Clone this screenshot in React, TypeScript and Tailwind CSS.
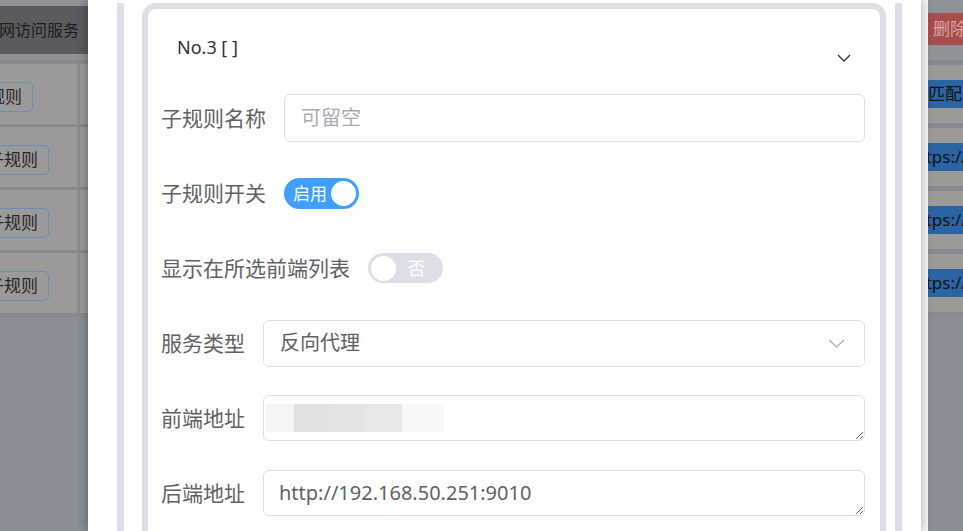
import React from "react";

const font = "font-['Noto_Sans','Noto_Sans_CJK_SC',sans-serif]";

function LeftRow({ first }: { first?: boolean }) {
  return (
    <>
      <div className="flex h-[60px]">
        <div className="w-[77px] bg-[#9a9a9b] flex items-center overflow-hidden">
          <div
            className={`mt-[5px] h-[30px] shrink-0 flex items-center border border-[#6b8db6] rounded-[5px] pr-[10px] text-[17px] text-[#262626] ${
              first ? "ml-[-13px]" : "ml-[-24px] pl-[10px]"
            }`}
          >
            {first ? "规则" : "子规则"}
          </div>
        </div>
        <div className="w-[3px] bg-[#8b8c8e]" />
        <div className="flex-1 bg-[#9a9a9b]" />
      </div>
      <div className="h-[3px] bg-[#88898c]" />
    </>
  );
}

function RightRow({ text, shift }: { text: string; shift: string }) {
  return (
    <div className="flex flex-col h-[63px]">
      <div className="h-[6px] bg-[#9a9a9b]" />
      <div className="h-[1px] bg-[#8da46c]" />
      <div className="h-[8px] bg-[#9a9a9b]" />
      <div className="h-[28px] bg-[#2b64a3] flex items-center overflow-hidden">
        <span className={`whitespace-nowrap text-[17px] text-[#111] ${shift}`}>{text}</span>
      </div>
      <div className="h-[9px] bg-[#9a9a9b]" />
      <div className="h-[1px] bg-[#8da46c]" />
      <div className="h-[5px] bg-[#9a9a9b]" />
      <div className="h-[5px] bg-[#87898c]" />
    </div>
  );
}

function Label({ children }: { children: React.ReactNode }) {
  return (
    <div className="shrink-0 mr-[18px] text-[21px] leading-[28px] text-[#606266] whitespace-nowrap">
      {children}
    </div>
  );
}

export default function App() {
  return (
    <div className={`w-[963px] h-[531px] overflow-hidden flex bg-[#8a8e95] ${font}`}>
      {/* left dimmed table */}
      <div className="w-[88px] shrink-0 flex flex-col">
        <div className="h-[6px] bg-[#8e9196]" />
        <div className="h-[48px] bg-[#5a5b5e] flex items-center overflow-hidden">
          <span className="whitespace-nowrap text-[16px] text-[#1b1b1b] ml-[-1px]">网访问服务</span>
        </div>
        <div className="h-[6px] bg-[#8e9195]" />
        <div className="h-[4px] bg-[#86898d]" />
        <LeftRow first />
        <LeftRow />
        <LeftRow />
        <LeftRow />
        <div className="h-[1px] bg-[#86898d]" />
      </div>

      {/* modal */}
      <div className="w-[833px] shrink-0 bg-white shadow-[0_0_10px_rgba(0,0,0,0.35)] pl-[29px] pr-[19px] relative z-10">
        <div className="h-full border-x-[7px] border-[#dcdfe6] pl-[18px] pr-[9px]">
          <div className="mt-[3px] h-[600px] border-[6px] border-b-0 border-[#dcdfe6] rounded-t-[14px] pl-[13px] pr-[15px]">
            {/* collapse header */}
            <div className="h-[85px] flex justify-between items-start pt-[26px] pl-[16px] pr-[14px]">
              <span className="text-[18px] leading-[24px] text-[#303133]">No.3 [ ]</span>
              <svg width="14" height="8" viewBox="0 0 14 8" className="mt-[19px]">
                <path d="M1 1 L7 7 L13 1" fill="none" stroke="#303133" strokeWidth="1.3" />
              </svg>
            </div>

            {/* 子规则名称 */}
            <div className="flex items-center h-[48px] mb-[27px]">
              <Label>子规则名称</Label>
              <div className="flex-1 h-[48px] border border-[#dcdfe6] rounded-[6px] flex items-center px-[16px] text-[20px] text-[#a8abb2]">
                可留空
              </div>
            </div>

            {/* 子规则开关 */}
            <div className="flex items-center h-[48px] mb-[27px]">
              <Label>子规则开关</Label>
              <div className="w-[75px] h-[31px] rounded-full bg-[#409eff] flex items-center justify-between pl-[9px] pr-[3px]">
                <span className="text-[17px] leading-none text-white">启用</span>
                <div className="w-[25px] h-[25px] rounded-full bg-white" />
              </div>
            </div>

            {/* 显示在所选前端列表 */}
            <div className="flex items-center h-[48px] mb-[27px]">
              <Label>显示在所选前端列表</Label>
              <div className="w-[75px] h-[30px] rounded-full bg-[#dcdfe6] flex items-center pl-[3px] pr-[14px]">
                <div className="w-[25px] h-[25px] rounded-full bg-white" />
                <span className="flex-1 text-center text-[18px] leading-none text-white pl-[8px]">否</span>
              </div>
            </div>

            {/* 服务类型 */}
            <div className="flex items-center h-[48px] mb-[27px]">
              <Label>服务类型</Label>
              <div className="flex-1 h-[47px] border border-[#dcdfe6] rounded-[6px] flex items-center justify-between pl-[16px] pr-[19px] text-[20px] text-[#606266]">
                <span>反向代理</span>
                <svg width="17" height="9" viewBox="0 0 17 9">
                  <path d="M1 1 L8.5 8 L16 1" fill="none" stroke="#a8abb2" strokeWidth="1.2" />
                </svg>
              </div>
            </div>

            {/* 前端地址 */}
            <div className="flex items-center h-[48px] mb-[27px]">
              <Label>前端地址</Label>
              <div className="flex-1 relative h-[46px]">
                <textarea
                  readOnly
                  value=""
                  className="w-full h-[46px] block border border-[#dcdfe6] rounded-[6px] px-[16px] py-[9px] text-[20px] leading-[26px] text-[#606266] outline-none resize-y"
                />
                <div className="absolute left-[3px] top-[9px] h-[28px] flex">
                  <div className="w-[28px] bg-[#f5f5f5]" />
                  <div className="w-[35px] bg-[#e1e1e1]" />
                  <div className="w-[36px] bg-[#e4e4e4]" />
                  <div className="w-[37px] bg-[#e7e7e7]" />
                  <div className="w-[42px] bg-[#f8f8f8]" />
                </div>
              </div>
            </div>

            {/* 后端地址 */}
            <div className="flex items-center h-[48px] mb-[27px]">
              <Label>后端地址</Label>
              <textarea
                readOnly
                value="http://192.168.50.251:9010"
                className="flex-1 h-[46px] block border border-[#dcdfe6] rounded-[6px] px-[15px] py-[9px] text-[20px] leading-[26px] text-[#606266] outline-none resize-y overflow-hidden"
              />
            </div>
          </div>
        </div>
      </div>

      {/* scrollbar strip */}
      <div className="w-[7px] shrink-0 bg-[#f7f7f7]" />

      {/* right dimmed table */}
      <div className="w-[35px] shrink-0 flex flex-col">
        <div className="h-[13px] bg-[#8e9196]" />
        <div className="h-[32px] bg-[#a84c4c] flex items-center overflow-hidden pl-[5px]">
          <span className="whitespace-nowrap text-[17px] text-[#d8a4a4]">删除</span>
        </div>
        <div className="h-[15px] bg-[#8f9297]" />
        <div className="h-[5px] bg-[#86898d]" />
        <RightRow text="匹配" shift="ml-[0px]" />
        <RightRow text="https://" shift="ml-[-19px]" />
        <RightRow text="https://" shift="ml-[-19px]" />
        <RightRow text="https://" shift="ml-[-19px]" />
      </div>
    </div>
  );
}
